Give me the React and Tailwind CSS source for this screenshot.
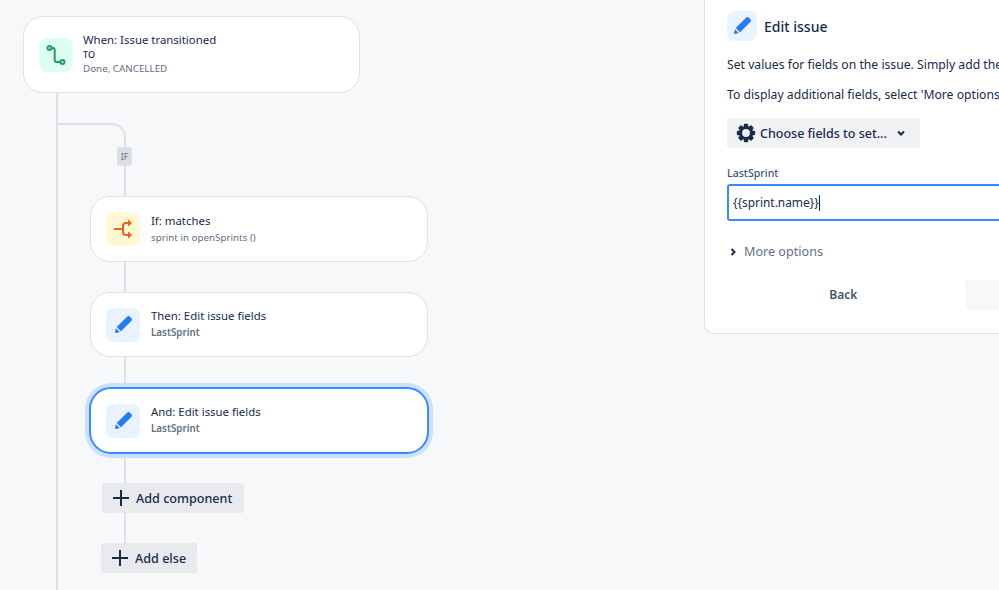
const font = "font-['Noto_Sans','Open_Sans',sans-serif]";

function Pencil({ size = 24 }) {
  return (
    <svg width={size} height={size} viewBox="0 0 24 24" className="text-[#2579ff]">
      <path
        fill="currentColor"
        d="M4.1 19.1l.8-3.9 3.9 3.9-3.9.8a.7.7 0 0 1-.8-.8zM5.8 14L16.3 3.5a1.8 1.8 0 0 1 2.5 0l1.7 1.7a1.8 1.8 0 0 1 0 2.5L10 18.2z"
      />
    </svg>
  );
}

function BranchIcon() {
  return (
    <svg width="24" height="24" viewBox="0 0 24 24" fill="none" stroke="#1f9d6b" strokeWidth="2" strokeLinecap="round">
      <circle cx="5.5" cy="5" r="2" />
      <circle cx="18.5" cy="19" r="2" />
      <path d="M7.5 5h1.2a2 2 0 0 1 2 2v10a2 2 0 0 0 2 2h3.8" />
    </svg>
  );
}

function IfIcon() {
  return (
    <svg width="24" height="24" viewBox="0 0 24 24" fill="none" stroke="#e56910" strokeWidth="2">
      <path d="M3 12h8" />
      <path d="M19 6h-4a3 3 0 0 0-3 3v6a3 3 0 0 0 3 3h4" />
      <path d="M17.5 3.2L20.5 6l-3 2.8zM17.5 15.2l3 2.8-3 2.8z" fill="#e56910" strokeWidth="1" />
    </svg>
  );
}

function Gear() {
  const teeth = [0, 45, 90, 135, 180, 225, 270, 315];
  return (
    <svg width="20" height="20" viewBox="0 0 24 24" className="text-[#172b4d]">
      {teeth.map((a) => (
        <rect key={a} x="9.4" y="1" width="5.2" height="5" rx="1" fill="currentColor" transform={`rotate(${a} 12 12)`} />
      ))}
      <circle cx="12" cy="12" r="6.6" fill="none" stroke="currentColor" strokeWidth="3.8" />
    </svg>
  );
}

function Plus() {
  return (
    <svg width="18" height="18" viewBox="0 0 18 18" stroke="#172b4d" strokeWidth="2">
      <path d="M9 1v16M1 9h16" />
    </svg>
  );
}

function Chevron({ dir = "down" }) {
  return (
    <svg width="10" height="10" viewBox="0 0 10 10" fill="none" stroke="#172b4d" strokeWidth="2" className={dir === "right" ? "-rotate-90" : ""}>
      <path d="M2 3.5L5 6.5 8 3.5" />
    </svg>
  );
}

function Card({ tint, icon, title, children, className, textClass = "ml-[11px]" }) {
  return (
    <div className={`flex w-[338px] items-center rounded-[20px] border border-[#dfe1e6] bg-white pl-[15px] ${className}`}>
      <div className={`flex h-[34px] w-[34px] shrink-0 items-center justify-center rounded-[8px] ${tint}`}>{icon}</div>
      <div className={textClass}>
        <div className="mb-[1px] text-[11.4px] leading-[16px] text-[#172b4d]">{title}</div>
        {children}
      </div>
    </div>
  );
}

export default function App() {
  return (
    <div className={`relative flex h-[590px] w-[999px] overflow-hidden bg-[#f7f8f9] ${font}`}>
      {/* connector lines */}
      <div className="absolute left-[56px] top-[90px] h-[500px] w-[2px] bg-[#dfe1e6]" />
      <div className="absolute left-[58px] top-[123px] h-[24px] w-[68px] rounded-tr-[14px] border-r-2 border-t-2 border-[#dfe1e6]" />
      <div className="absolute left-[124px] top-[147px] h-[400px] w-[2px] bg-[#dfe1e6]" />

      <div className="relative w-[704px] shrink-0 pl-[23px] pt-[16px]">
        <Card
          className="h-[77px] !w-[337px]"
          textClass="ml-[10px]"
          tint="bg-[#dcfff1]"
          icon={<BranchIcon />}
          title="When: Issue transitioned"
        >
          <div className="text-[9px] font-medium leading-[12px] text-[#172b4d]">TO</div>
          <div className="text-[9.8px] leading-[16px] text-[#626f86]">Done, CANCELLED</div>
        </Card>

        <div className="ml-[94px] mt-[54px] flex h-[19px] w-[15px] items-center justify-center rounded-[3px] bg-[#dcdfe4] text-[9px] text-[#626f86]">
          IF
        </div>

        <Card className="ml-[67px] mt-[30px] h-[66px]" tint="bg-[#fff7d6]" icon={<IfIcon />} title="If: matches">
          <div className="text-[9.8px] leading-[16px] text-[#626f86]">sprint in openSprints ()</div>
        </Card>

        <Card className="ml-[67px] mt-[30px] h-[65px]" tint="bg-[#e9f2ff]" icon={<Pencil />} title="Then: Edit issue fields">
          <div className="text-[9.8px] font-semibold leading-[16px] text-[#626f86]">LastSprint</div>
        </Card>

        <div className="ml-[66px] mt-[30px] w-[340px] rounded-[22px] shadow-[0_0_0_4px_#cce0ff]">
          <Card
            className="h-[67px] !w-[340px] !rounded-[22px] !border-2 !border-[#388bff] !pl-[15px]"
            tint="bg-[#e9f2ff]"
            icon={<Pencil />}
            title="And: Edit issue fields"
          >
            <div className="text-[9.8px] font-semibold leading-[16px] text-[#626f86]">LastSprint</div>
          </Card>
        </div>

        <button className="ml-[79px] mt-[29px] flex h-[30px] w-[142px] items-center rounded-[3px] bg-[#e9eaee] pl-[10px] text-[12.6px] font-medium text-[#172b4d]">
          <Plus />
          <span className="ml-[6px] mt-[2px]">Add component</span>
        </button>

        <button className="ml-[78px] mt-[30px] flex h-[30px] w-[96px] items-center rounded-[3px] bg-[#e9eaee] pl-[10px] text-[12.6px] font-medium text-[#172b4d]">
          <Plus />
          <span className="ml-[6px] mt-[2px]">Add else</span>
        </button>
      </div>

      {/* edit panel */}
      <div className="-mt-[10px] h-[344px] w-[320px] shrink-0 rounded-bl-[10px] border-b border-l border-[#dfe1e6] bg-white pl-[22px] pt-[21px]">
        <div className="flex items-center">
          <div className="flex h-[30px] w-[30px] items-center justify-center rounded-[8px] bg-[#e9f2ff]">
            <Pencil />
          </div>
          <div className="ml-[7px] text-[14px] font-medium text-[#172b4d]">Edit issue</div>
        </div>
        <p className="mt-[14px] whitespace-nowrap text-[12.2px] leading-[20px] text-[#172b4d]">
          Set values for fields on the issue. Simply add the fields you want to edit.
        </p>
        <p className="mt-[10px] whitespace-nowrap text-[12.2px] leading-[20px] text-[#172b4d]">
          To display additional fields, select 'More options'.
        </p>
        <button className="mt-[13px] flex h-[30px] w-[193px] items-center rounded-[3px] bg-[#f1f2f4] pl-[9px] text-[12.5px] font-medium text-[#172b4d]">
          <Gear />
          <span className="ml-[4px] mt-[2px]">Choose fields to set...</span>
          <span className="ml-[9px]"><Chevron /></span>
        </button>
        <div className="mt-[17px] text-[10.6px] font-medium leading-[16px] text-[#44546f]">LastSprint</div>
        <div className="mt-[3px] flex h-[37px] w-[320px] items-center rounded-[3px] border-2 border-[#388bff] bg-white pl-[4px] text-[11.9px] text-[#172b4d]">
          <span>{"{{sprint.name}}"}</span>
          <span className="h-[16px] w-px bg-[#172b4d]" />
        </div>
        <div className="mt-[22px] flex items-center pl-[1px] text-[12.6px] leading-[18px] text-[#626f86]">
          <Chevron dir="right" />
          <span className="ml-[6px]">More options</span>
        </div>
        <div className="mt-[19px] flex items-center">
          <button className="w-[235px] text-center text-[12px] font-semibold leading-[30px] text-[#44546f]">Back</button>
          <div className="ml-[5px] h-[30px] w-[60px] rounded-[3px] bg-[#f7f8f9]" />
        </div>
      </div>
    </div>
  );
}
